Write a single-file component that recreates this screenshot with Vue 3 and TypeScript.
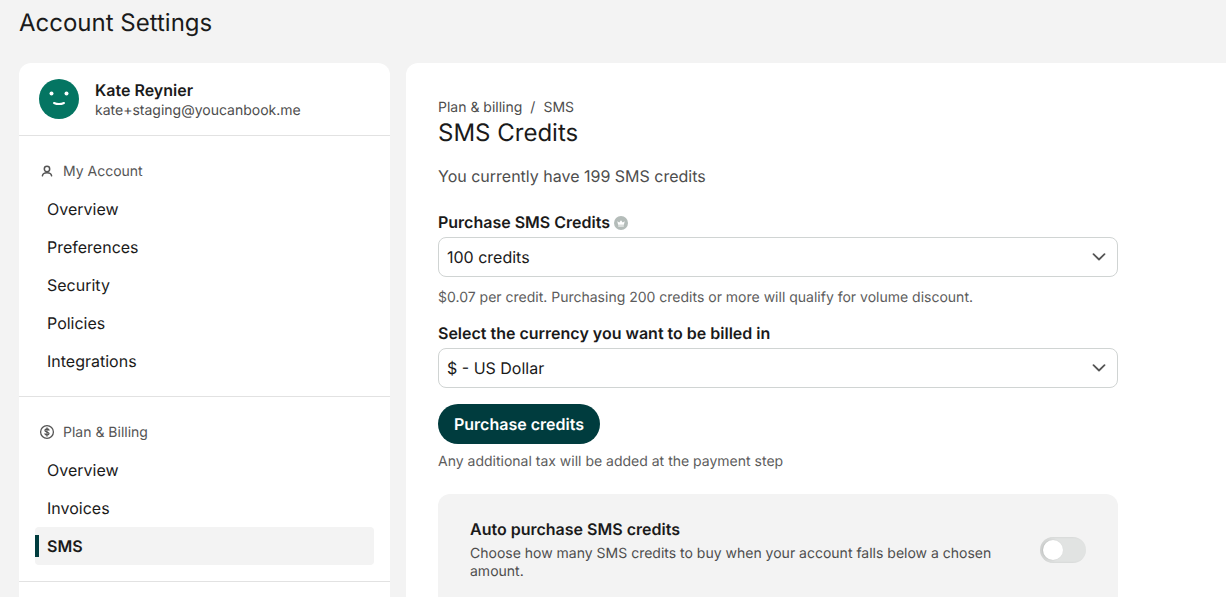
<script setup lang="ts">
const accountLinks: string[] = ['Overview', 'Preferences', 'Security', 'Policies', 'Integrations']
</script>

<template>
  <div class="page">
    <h1 class="title">Account Settings</h1>
    <div class="columns">
      <aside class="sidebar">
        <div class="profile">
          <svg class="avatar" viewBox="0 0 40 40" width="40" height="40">
            <circle cx="20" cy="20" r="20" fill="#047562" />
            <circle cx="12.500" cy="14.500" r="2" fill="#fff" />
            <circle cx="27.500" cy="14.500" r="2" fill="#fff" />
            <path d="M15 24c3.400 1.500 6.600 1.500 10 0" fill="none" stroke="#fff" stroke-width="2" stroke-linecap="round" />
          </svg>
          <div class="who">
            <div class="name">Kate Reynier</div>
            <div class="email">kate+staging@youcanbook.me</div>
          </div>
        </div>
        <section class="group">
          <div class="group-head">
            <svg viewBox="0 0 16 16" width="16" height="16" fill="none" stroke="#555" stroke-width="1.500">
              <circle cx="8" cy="6" r="2.700" />
              <path d="M3.400 12.800c.4-2 2.300-3 4.600-3s4.200 1 4.600 3" stroke-linecap="round" />
            </svg>
            <span>My Account</span>
          </div>
          <a v-for="l in accountLinks" :key="l" class="link">{{ l }}</a>
        </section>
        <section class="group second">
          <div class="group-head">
            <svg viewBox="0 0 16 16" width="16" height="16" fill="none" stroke="#555" stroke-width="1.300">
              <circle cx="8" cy="8" r="6.400" />
              <path d="M10 6.100C9.600 5.300 8.900 5 8 5c-1.100 0-2 .5-2 1.500S7 7.700 8 8s2 .6 2 1.500S9.100 11 8 11c-.9 0-1.600-.3-2-1.100M8 4v8" stroke-linecap="round" />
            </svg>
            <span>Plan &amp; Billing</span>
          </div>
          <a class="link">Overview</a>
          <a class="link">Invoices</a>
          <a class="link active">SMS</a>
        </section>
        <div class="rest"></div>
      </aside>
      <main class="panel">
        <div class="crumbs"><span>Plan &amp; billing</span><span>/</span><span>SMS</span></div>
        <h2 class="heading">SMS Credits</h2>
        <p class="balance">You currently have 199 SMS credits</p>

        <div class="label-row">
          <label class="label">Purchase SMS Credits</label>
          <svg class="crown" viewBox="0 0 14 14" width="14" height="14">
            <circle cx="7" cy="7" r="7" fill="#b4bcb9" />
            <path d="M3.300 5.200l2 1.300L7 4.200l1.700 2.300 2-1.300-.8 3.500H4.100zM4.200 9.500h5.600v1H4.200z" fill="#fff" />
          </svg>
        </div>
        <div class="select">
          <span>100 credits</span>
          <svg viewBox="0 0 14 8" width="14" height="8" fill="none" stroke="#555" stroke-width="1.800" stroke-linecap="round" stroke-linejoin="round"><path d="M1.500 1.200 7 6.500l5.500-5.300" /></svg>
        </div>
        <p class="hint">$0.07 per credit. Purchasing 200 credits or more will qualify for volume discount.</p>

        <label class="label currency">Select the currency you want to be billed in</label>
        <div class="select">
          <span>$ - US Dollar</span>
          <svg viewBox="0 0 14 8" width="14" height="8" fill="none" stroke="#555" stroke-width="1.800" stroke-linecap="round" stroke-linejoin="round"><path d="M1.500 1.200 7 6.500l5.500-5.300" /></svg>
        </div>
        <button class="buy" type="button">Purchase credits</button>
        <p class="hint tax">Any additional tax will be added at the payment step</p>

        <div class="auto">
          <div class="auto-text">
            <div class="auto-title">Auto purchase SMS credits</div>
            <div class="auto-desc">Choose how many SMS credits to buy when your account falls below a chosen amount.</div>
          </div>
          <span class="toggle"><span class="knob"></span></span>
        </div>
      </main>
    </div>
  </div>
</template>

<style>
html, body { margin: 0; background: #f3f3f3; overflow: hidden; }
</style>

<style scoped>
.page {
  width: 1226px;
  height: 597px;
  overflow: hidden;
  box-sizing: border-box;
  padding: 8px 0 0 19px;
  font-family: Inter, "Liberation Sans", sans-serif;
  text-rendering: geometricPrecision;
  color: #1a1a1a;
  background: #f3f3f3;
}
.title {
  margin: 0 0 25px;
  font-size: 24px;
  line-height: 30px;
  font-weight: 400;
}
.columns { display: flex; gap: 16px; align-items: flex-start; }
.sidebar {
  width: 371px;
  flex: none;
  background: #fff;
  border-radius: 12px 12px 0 0;
}
.profile {
  display: flex;
  align-items: center;
  gap: 16px;
  height: 72px;
  padding: 0 20px;
  border-bottom: 1px solid #e2e2e2;
}
.avatar { display: block; flex: none; }
.who { padding-top: 3px; }
.name { font-size: 16px; line-height: 20px; font-weight: 600; }
.email { margin-top: 1px; font-size: 14px; line-height: 20px; color: #4d4d4d; }
.group { padding: 16px 16px 16px; border-bottom: 1px solid #e2e2e2; }
.group-head {
  display: flex;
  align-items: center;
  gap: 8px;
  height: 36px;
  padding: 1px 0 1px 4px;
  font-size: 14px;
  color: #555;
}
.link {
  display: block;
  height: 38px;
  line-height: 38px;
  padding-left: 12px;
  font-size: 16px;
  color: #1a1a1a;
}
.link.active {
  font-weight: 600;
  background: #f3f3f3;
  border-radius: 4px;
  position: relative;
}
.link.active::before {
  content: "";
  position: absolute;
  left: 0;
  top: 8px;
  width: 4px;
  height: 22px;
  background: #003c3e;
}
.rest { height: 40px; }
.panel {
  flex: 1;
  min-height: 600px;
  background: #fff;
  border-radius: 12px 0 0 0;
  padding: 36px 32px 0;
}
.crumbs {
  display: flex;
  gap: 8px;
  font-size: 14px;
  line-height: 17px;
  color: #4d4d4d;
}
.heading {
  margin: 2px 0 0;
  font-size: 24px;
  line-height: 30px;
  font-weight: 400;
}
.balance {
  margin: 16px 0 0;
  font-size: 16px;
  line-height: 24px;
  color: #4d4d4d;
}
.label-row {
  display: flex;
  align-items: center;
  gap: 4px;
  margin-top: 22px;
}
.label {
  display: block;
  font-size: 16px;
  line-height: 24px;
  font-weight: 600;
}
.currency { margin-top: 13px; }
.crown { display: block; margin-top: 1px; }
.select {
  box-sizing: border-box;
  width: 680px;
  height: 40px;
  margin-top: 3px;
  padding: 0 11px 0 8px;
  display: flex;
  align-items: center;
  justify-content: space-between;
  border: 1px solid #d0d4d3;
  border-radius: 8px;
  font-size: 16px;
}
.hint {
  margin: 11px 0 0;
  font-size: 14px;
  line-height: 20px;
  color: #5c5c5c;
}
.buy {
  display: block;
  margin-top: 16px;
  height: 40px;
  padding: 0 16px;
  border: 0;
  border-radius: 20px;
  background: #003c3e;
  color: #fff;
  font: 600 16px Inter, "Liberation Sans", sans-serif;
  text-rendering: geometricPrecision;
}
.tax { margin-top: 8px; }
.auto {
  box-sizing: border-box;
  width: 680px;
  margin-top: 22px;
  padding: 24px 32px 41px;
  display: flex;
  align-items: center;
  justify-content: space-between;
  background: #f3f3f3;
  border-radius: 12px;
}
.auto-text { width: 540px; }
.auto-title { font-size: 16px; line-height: 22px; font-weight: 600; }
.auto-desc { margin-top: 5px; font-size: 14px; line-height: 18px; color: #4d4d4d; }
.toggle {
  flex: none;
  position: relative;
  width: 46px;
  height: 26px;
  border-radius: 13px;
  background: #e1e3e2;
  box-shadow: inset 2px 0 3px rgba(0, 0, 0, 0.08);
}
.knob {
  position: absolute;
  left: 3px;
  top: 3px;
  width: 20px;
  height: 20px;
  border-radius: 50%;
  background: #fff;
  box-shadow: -1px 0 2px rgba(0, 0, 0, 0.15);
}
</style>
